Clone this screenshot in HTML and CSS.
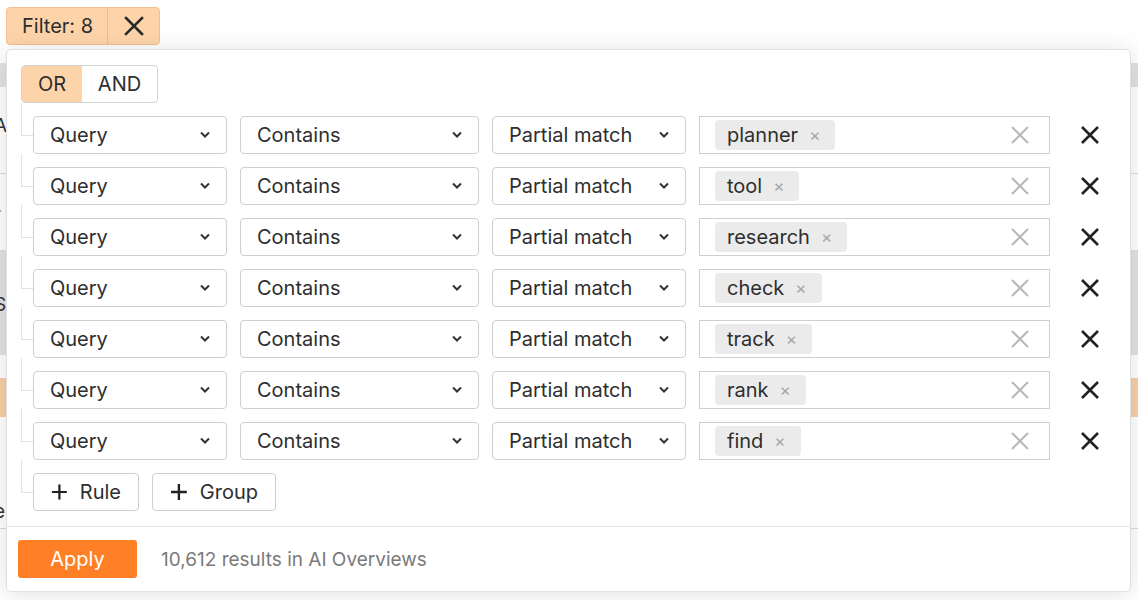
FILE: index.html
```html
<!DOCTYPE html>
<html>
<head>
<meta charset="utf-8">
<link rel="stylesheet" href="styles.css">
</head>
<body>
<div class="page">
  <div class="bg">
    <div class="bg-row bg-white h63"></div>
    <div class="bg-row bg-grey h24"></div>
    <div class="bg-row h86"><span class="bg-text t1">Al</span></div>
    <div class="bg-row h77 bt"><span class="bg-text t2">r</span></div>
    <div class="bg-row bg-grey h105"><span class="bg-text t3">S</span></div>
    <div class="bg-row h23"></div>
    <div class="bg-row bg-peach h39"></div>
    <div class="bg-row h111"><span class="bg-text t4">e</span></div>
    <div class="bg-row bt h72"></div>
  </div>

  <div class="filter-btn">
    <span class="filter-label">Filter: 8</span>
    <span class="filter-clear">
      <svg width="22" height="22" viewBox="0 0 22 22"><path d="M3 3 L19 19 M19 3 L3 19" stroke="#2b2b2b" stroke-width="2.6" stroke-linecap="square"/></svg>
    </span>
  </div>

  <div class="panel">
    <div class="panel-body">
      <div class="toggle">
        <span class="seg seg-on">OR</span>
        <span class="seg">AND</span>
      </div>
      <div class="children" id="rules"></div>
    </div>
    <div class="panel-footer">
      <button class="apply">Apply</button>
      <span class="results">10,612 results in AI Overviews</span>
    </div>
  </div>
</div>
<script src="app.js"></script>
</body>
</html>
```

FILE: app.js
```js
const tags = ["planner", "tool", "research", "check", "track", "rank", "find"];
const chevron = '<svg class="chev" width="12" height="8" viewBox="0 0 12 8"><path d="M2 1.5 L6 5.5 L10 1.5" fill="none" stroke="#333" stroke-width="2"/></svg>';
const clear = '<svg width="20" height="20" viewBox="0 0 20 20"><path d="M2 2 L18 18 M18 2 L2 18" stroke="#b8b8b8" stroke-width="2"/></svg>';
const remove = '<svg width="22" height="22" viewBox="0 0 22 22"><path d="M3 3 L19 19 M19 3 L3 19" stroke="#222" stroke-width="2.6"/></svg>';
const rules = document.getElementById("rules");
let html = "";
for (const t of tags) {
  html += `<div class="item rule">
    <div class="select w1"><span>Query</span>${chevron}</div>
    <div class="select w2"><span>Contains</span>${chevron}</div>
    <div class="select w3"><span>Partial match</span>${chevron}</div>
    <div class="tag-input"><span class="tag">${t}<span class="tag-x">×</span></span><span class="clear">${clear}</span></div>
    <span class="remove">${remove}</span>
  </div>`;
}
html += `<div class="item actions">
  <button class="add"><svg width="18" height="18" viewBox="0 0 18 18"><path d="M9 1 V17 M1 9 H17" stroke="#222" stroke-width="2.4"/></svg>Rule</button>
  <button class="add"><svg width="18" height="18" viewBox="0 0 18 18"><path d="M9 1 V17 M1 9 H17" stroke="#222" stroke-width="2.4"/></svg>Group</button>
</div>`;
rules.innerHTML = html;
```

FILE: styles.css
```css
* { box-sizing: border-box; }
html, body { margin: 0; padding: 0; }
body {
  font-family: Inter, "Noto Sans", sans-serif;
  color: #2e2e2e;
  background: #fff;
  width: 1138px;
  height: 600px;
  overflow: hidden;
}
.page { position: relative; width: 1138px; height: 600px; }

/* background page */
.bg { display: flex; flex-direction: column; width: 100%; }
.bg-row { position: relative; width: 100%; }
.bg-grey { background: #e2e2e4; }
.bg-peach { background: #f6cfa6; }
.bt { border-top: 1px solid #dcdcdc; }
.h63 { height: 63px; }
.h24 { height: 24px; }
.h86 { height: 86px; }
.h77 { height: 77px; }
.h105 { height: 105px; }
.h23 { height: 23px; }
.h39 { height: 39px; }
.h111 { height: 111px; }
.h72 { height: 72px; }
.bg-text { position: absolute; left: -6px; font-size: 19px; color: #333; }
.t1 { top: 27px; }
.t2 { top: 29px; color: #888; }
.t3 { top: 43px; }
.t4 { top: 83px; }

/* filter button */
.filter-btn {
  position: absolute;
  left: 6px; top: 7px;
  height: 38px;
  display: flex;
  background: #fdd4aa;
  border: 1px solid #f3c08e;
  border-radius: 4px;
  font-size: 20px;
}
.filter-label { display: flex; align-items: center; padding: 0 14px 0 15px; border-right: 1px solid #efbd8c; }
.filter-clear { display: flex; align-items: center; justify-content: center; width: 51px; }

/* panel */
.panel {
  position: absolute;
  left: 6px; top: 49px;
  width: 1125px; height: 543px;
  background: #fff;
  border: 1px solid #e0e0e0;
  border-radius: 5px;
  box-shadow: 0 2px 24px rgba(0,0,0,0.12);
  display: flex;
  flex-direction: column;
}
.panel-body { padding: 15px 14px 15px 14px; border-bottom: 1px solid #e6e6e6; }
.toggle {
  display: inline-flex;
  height: 38px;
  border: 1px solid #d2d2d2;
  border-radius: 4px;
  overflow: hidden;
  font-size: 20px;
}
.seg { display: flex; align-items: center; justify-content: center; }
.seg:first-child { width: 60px; }
.seg:last-child { width: 75px; }
.seg-on { background: #fdd4aa; }

.children { display: flex; flex-direction: column; gap: 13px; margin-top: 13px; margin-left: 12px; }
.item { position: relative; display: flex; align-items: center; }
.item::before {
  content: "";
  position: absolute;
  left: -12px; top: -13px;
  width: 11px;
  height: calc(50% + 13px);
  border-left: 1px solid #e2e2e2;
  border-bottom: 1px solid #e2e2e2;
}
.rule { gap: 13px; height: 38px; }
.select {
  height: 38px;
  border: 1px solid #cfcfcf;
  border-radius: 4px;
  display: flex;
  align-items: center;
  justify-content: space-between;
  padding: 0 15px 0 16px;
  font-size: 20px;
}
.w1 { width: 194px; }
.w2 { width: 239px; }
.w3 { width: 194px; }
.chev { flex: none; }
.tag-input {
  width: 351px;
  height: 38px;
  border: 1px solid #cfcfcf;
  display: flex;
  align-items: center;
  justify-content: space-between;
  padding: 0 19px 0 15px;
}
.tag {
  display: inline-flex;
  align-items: center;
  height: 30px;
  padding: 0 15px 0 12px;
  background: #ebebeb;
  border-radius: 4px;
  font-size: 20px;
}
.tag-x { color: #a5a5a5; font-size: 17px; margin-left: 11px; }
.clear { display: flex; }
.remove { display: flex; margin-left: 16px; }

.actions { gap: 13px; height: 38px; }
.add {
  height: 38px;
  display: flex;
  align-items: center;
  gap: 12px;
  padding: 0 17px;
  border: 1px solid #cfcfcf;
  border-radius: 4px;
  background: #fff;
  font-family: inherit;
  font-size: 20px;
  color: #2e2e2e;
}
.add:first-child { width: 106px; }
.add:last-child { width: 124px; }

.panel-footer {
  flex: 1;
  display: flex;
  align-items: center;
  padding: 0 11px;
  gap: 24px;
}
.apply {
  width: 119px;
  height: 38px;
  background: #ff7f27;
  border: none;
  border-radius: 3px;
  color: #fff;
  font-family: inherit;
  font-size: 20px;
}
.results { font-size: 19px; color: #7a7a7a; }
```
